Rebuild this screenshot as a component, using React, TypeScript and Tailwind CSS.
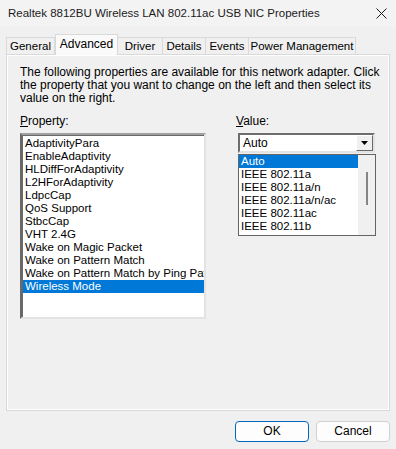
import { useState } from 'react';

const properties = [
  'AdaptivityPara',
  'EnableAdaptivity',
  'HLDiffForAdaptivity',
  'L2HForAdaptivity',
  'LdpcCap',
  'QoS Support',
  'StbcCap',
  'VHT 2.4G',
  'Wake on Magic Packet',
  'Wake on Pattern Match',
  'Wake on Pattern Match by Ping Pattern',
  'Wireless Mode',
];

const modes = ['Auto', 'IEEE 802.11a', 'IEEE 802.11a/n', 'IEEE 802.11a/n/ac', 'IEEE 802.11ac', 'IEEE 802.11b'];

const tabs = [
  { label: 'General', w: 'w-[49px]' },
  { label: 'Advanced', w: 'w-[63px]' },
  { label: 'Driver', w: 'w-[45px]' },
  { label: 'Details', w: 'w-[43px]' },
  { label: 'Events', w: 'w-[43px]' },
  { label: 'Power Management', w: 'w-[107px]' },
];

export default function App() {
  const [activeTab, setActiveTab] = useState('Advanced');
  const [selected, setSelected] = useState('Wireless Mode');
  const [value, setValue] = useState('Auto');

  return (
    <div className="w-[396px] h-[449px] bg-[#f0f0f0] flex flex-col text-[12px] leading-[13px] text-black font-['Liberation_Sans',Arial,sans-serif] overflow-hidden">
      {/* title bar */}
      <div className="h-[27px] flex-none flex items-center justify-between pl-[8px] pr-[8px] bg-[#f3f3f3]">
        <span className="text-[11.5px] text-[#1b1b1b] whitespace-nowrap">Realtek 8812BU Wireless LAN 802.11ac USB NIC Properties</span>
        <svg width="11" height="11" viewBox="0 0 11 11" className="mr-[1px]">
          <path d="M0.5 0.5 L10.5 10.5 M10.5 0.5 L0.5 10.5" stroke="#1b1b1b" strokeWidth="1" />
        </svg>
      </div>

      {/* tabs */}
      <div className="mt-[7px] h-[20px] flex-none flex items-end pl-[6px] relative z-10">
        {tabs.map((t) =>
          t.label === activeTab ? (
            <button
              key={t.label}
              onClick={() => setActiveTab(t.label)}
              className={`${t.w} h-[21px] -mb-[1px] bg-[#fafafa] border border-b-0 border-[#d9d9d9] flex items-start justify-center pt-[3px] text-[12px] whitespace-nowrap`}
            >
              {t.label}
            </button>
          ) : (
            <button
              key={t.label}
              onClick={() => setActiveTab(t.label)}
              className={`${t.w} h-[17px] bg-[#f0f0f0] border border-b-0 border-l-0 first:border-l border-[#d9d9d9] flex items-start justify-center pt-[2px] text-[11.5px] whitespace-nowrap`}
            >
              {t.label}
            </button>
          )
        )}
      </div>

      {/* panel */}
      <div className="mx-[6px] w-[384px] h-[357px] flex-none border border-[#d9d9d9]">
        <div className="h-full border border-white px-[12px] pt-[10px] relative">
          <p className="whitespace-nowrap">
            The following properties are available for this network adapter. Click
            <br />
            the property that you want to change on the left and then select its
            <br />
            value on the right.
          </p>

          <div className="mt-[10px] flex gap-[30px]">
            <div className="w-[186px] flex flex-col">
              <div className="h-[13px]">
                <span className="underline">P</span>roperty:
              </div>
              <div className="mt-[5px] h-[186px] bg-white border-2 border-t-[#a0a0a0] border-l-[#696969] border-r-[#e3e3e3] border-b-[#e3e3e3] overflow-hidden">
                <div className="h-full border-t border-l border-[#696969] pt-[1px] text-[11.5px]">
                  {properties.map((p) => (
                    <div
                      key={p}
                      onClick={() => setSelected(p)}
                      className={`h-[13px] pl-[2px] whitespace-nowrap overflow-hidden ${
                        p === selected ? 'bg-[#0078d7] text-white' : ''
                      }`}
                    >
                      {p}
                    </div>
                  ))}
                </div>
              </div>
            </div>

            <div className="w-[140px] flex flex-col relative">
              <div className="h-[13px]">
                <span className="underline">V</span>alue:
              </div>
              <div className="mt-[5px] ml-[2px] w-[137px] h-[20px] bg-white border-2 border-t-[#6d6d6d] border-l-[#6d6d6d] border-r-[#e3e3e3] border-b-[#e3e3e3] flex items-center">
                <span className="flex-1 pl-[3px]">{value}</span>
                <div className="w-[17px] h-[16px] bg-[#f0f0f0] border border-t-white border-l-white border-r-[#696969] border-b-[#696969] flex items-center justify-center">
                  <svg width="7" height="4" viewBox="0 0 7 4">
                    <path d="M0 0 H7 L3.5 4 Z" fill="#000" />
                  </svg>
                </div>
              </div>

              {/* open dropdown list */}
              <div className="absolute left-[2px] top-[39px] w-[138px] h-[82px] bg-white border border-[#646464] flex text-[11.5px]">
                <div className="flex-1 overflow-hidden">
                  {modes.map((m) => (
                    <div
                      key={m}
                      onClick={() => setValue(m)}
                      className={`h-[13px] pl-[2px] whitespace-nowrap ${m === value ? 'bg-[#0078d7] text-white' : ''}`}
                    >
                      {m}
                    </div>
                  ))}
                </div>
                <div className="w-[17px] bg-[#f0f0f0] flex justify-center pt-[17px]">
                  <div className="w-[2px] h-[33px] bg-[#858585] ml-[1px]" />
                </div>
              </div>
            </div>
          </div>
        </div>
      </div>

      {/* buttons */}
      <div className="mt-[10px] flex justify-end gap-[7px] pr-[6px]">
        <button className="w-[74px] h-[21px] bg-[#fdfdfd] border border-[#0067c0] rounded-[4px] text-[12px]">OK</button>
        <button className="w-[74px] h-[21px] bg-[#fdfdfd] border border-[#d0d0d0] rounded-[4px] text-[12px]">Cancel</button>
      </div>
    </div>
  );
}
